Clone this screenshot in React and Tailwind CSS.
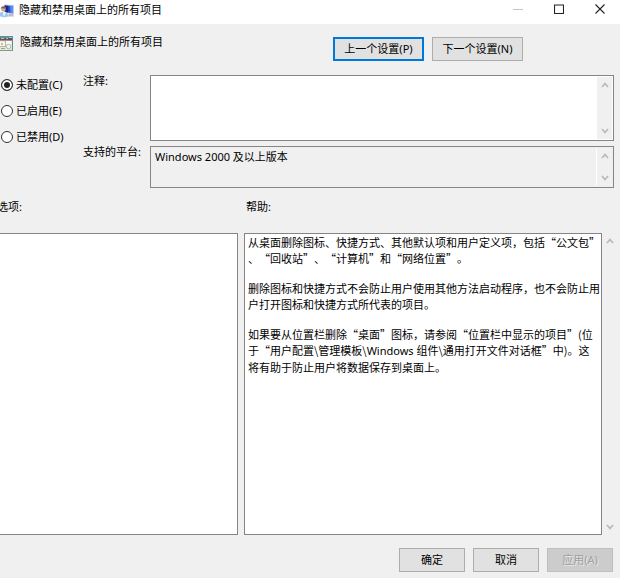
import { useState } from 'react';

const STATES = [
  { value: 'none', label: '未配置(C)' },
  { value: 'enabled', label: '已启用(E)' },
  { value: 'disabled', label: '已禁用(D)' },
];

const PolicyIcon = () => (
  <svg className="block h-4 w-4 shrink-0" viewBox="0 -1 16 16" aria-hidden="true">
    <path d="M4 1.4L14 2v9.4L4 10z" fill="#c3cde2" />
    <path d="M4.6 2.4L13 3v7.2L4.6 9z" fill="#2450d0" />
    <path d="M4.6 2.4l3.6.3v6.8L4.6 9z" fill="#16289a" />
    <path d="M10 2.8l3 .2v7.2l-2.4-.3z" fill="#5f8cec" />
    <path d="M8.6 11h4l1.6 2.4H8z" fill="#b9bfca" />
    <circle cx="3.4" cy="6" r="2.4" fill="#d9a878" />
    <path d="M.8 5.8c0-3.4 5-3.6 5.3-.2-1.8.2-3.2-.8-5.3.2z" fill="#7d6450" />
    <path d="M-1 13c0-3 2-4.6 4.4-4.6S8.2 10 8.2 13.4L4 14.6z" fill="#9cc6f0" />
    <path d="M2.6 8.6l1.4 5.6 2-5.2z" fill="#eef5fd" />
  </svg>
);

const SettingIcon = () => (
  <svg className="block h-[18px] w-4 shrink-0" viewBox="0 0 16 18" aria-hidden="true">
    <rect x="-1" y="2" width="14" height="15" fill="#e9e7dc" />
    <rect x="-1" y="2" width="14" height="2" fill="#5f9298" />
    <rect x="-1" y="4" width="13" height="2" fill="#55567c" />
    <path d="M1 4.5h3M6 4.5h2" stroke="#d8c46a" />
    <path d="M9 3.5h3" stroke="#a9c8c8" />
    <path d="M-1 6.5h13" stroke="#a98c90" />
    <path d="M12.5 4v13" stroke="#5a8f8a" />
    <path d="M-1 16.5h14" stroke="#7c9c92" />
    <rect x="0" y="8" width="5" height="4" fill="#f8f6ee" />
    <rect x="1" y="9" width="2" height="2" fill="#b9c78c" />
    <rect x="6" y="7" width="5" height="4" fill="#fbfaf6" />
    <path d="M5.5 7v5M0 12.5h6" stroke="#b9b3a6" />
    <circle cx="8.5" cy="12.5" r="2.2" fill="#f6f6f0" stroke="#8fae8f" strokeWidth="0.8" />
    <path d="M1 14.5h4" stroke="#8fae84" />
  </svg>
);

const Chevron = ({ down }) => (
  <svg className={`block h-2 w-2 ${down ? 'rotate-180' : ''}`} viewBox="0 0 8 8" aria-hidden="true">
    <path d="M1 6l3-3.5L7 6" fill="none" stroke="#b9b9b9" strokeWidth="1.7" />
  </svg>
);

const ScrollBar = ({ className = '' }) => (
  <div className={`flex shrink-0 flex-col items-center justify-between bg-[#f0f0f0] ${className}`}>
    <Chevron />
    <Chevron down />
  </div>
);

const Button = ({ children, className = '', ...props }) => (
  <button type="button" className={`h-6 whitespace-nowrap text-center ${className}`} {...props}>
    {children}
  </button>
);

const Latin = ({ children }) => <span className="font-['Noto_Sans']">{children}</span>;

const App = () => {
  const [state, setState] = useState('none');
  const [comment, setComment] = useState('');

  return (
    <div className="flex min-h-screen flex-col overflow-hidden bg-[#f0f0f0] font-['Noto_Sans','Noto_Sans_CJK_SC',sans-serif] text-[11px] leading-4 text-black">
      <header className="flex h-6 items-start justify-between bg-white">
        <div className="flex items-center gap-[3px] pt-0.5">
          <PolicyIcon />
          <h1>隐藏和禁用桌面上的所有项目</h1>
        </div>
        <div className="flex gap-[31px] pt-1 pr-[15px]">
          <button type="button" aria-label="最小化" disabled>
            <svg className="block h-[10px] w-[10px]" viewBox="0 0 10 10"><path d="M0 5.5h10" stroke="#c4c4c4" /></svg>
          </button>
          <button type="button" aria-label="最大化">
            <svg className="block h-[10px] w-[10px]" viewBox="0 0 10 10"><path d="M.5 1h9v8.5h-9z" fill="none" stroke="#222" strokeWidth="1.1" /></svg>
          </button>
          <button type="button" aria-label="关闭">
            <svg className="block h-[10px] w-[10px]" viewBox="0 0 10 10"><path d="M.5.5l9 9M9.5.5l-9 9" stroke="#222" strokeWidth="1.1" /></svg>
          </button>
        </div>
      </header>

      <div className="flex h-[51px] items-start justify-between pt-[10px]">
        <div className="flex items-start gap-1">
          <SettingIcon />
          <h2>隐藏和禁用桌面上的所有项目</h2>
        </div>
        <div className="flex gap-2 pt-[3px] pr-[97px]">
          <Button className="w-[91px] border-2 border-[#0078d7] bg-[#e1e1e1]">上一个设置(P)</Button>
          <Button className="w-[91px] border border-[#adadad] bg-[#e1e1e1]">下一个设置(N)</Button>
        </div>
      </div>

      <div className="flex pr-[6px]">
        <fieldset className="flex w-[83px] shrink-0 flex-col gap-[10px] pt-[2px]">
          {STATES.map((s) => (
            <label key={s.value} className="flex items-center gap-[3px] pl-px">
              <input
                type="radio"
                name="state"
                checked={state === s.value}
                onChange={() => setState(s.value)}
                className="h-3 w-3 appearance-none rounded-full border border-[#333] bg-white checked:bg-[#222] checked:shadow-[inset_0_0_0_2px_#fff]"
              />
              {s.label}
            </label>
          ))}
        </fieldset>
        <div className="grid flex-1 grid-cols-[67px_1fr] gap-y-[5px]">
          <label htmlFor="comment" className="-mt-0.5">注释:</label>
          <div className="flex h-[66px] border border-[#858585] bg-white p-px">
            <textarea
              id="comment"
              value={comment}
              onChange={(e) => setComment(e.target.value)}
              className="min-w-0 flex-1 resize-none overflow-hidden px-[3px] py-px outline-none"
            />
            <ScrollBar className="w-[15px] py-1" />
          </div>
          <label htmlFor="platform" className="-mt-0.5">支持的平台:</label>
          <div className="flex h-[42px] border border-[#858585] p-px">
            <textarea
              id="platform"
              readOnly
              value="Windows 2000 及以上版本"
              className="min-w-0 flex-1 resize-none overflow-hidden px-[3px] py-px outline-none"
            />
            <ScrollBar className="w-4 border-l border-white py-1" />
          </div>
        </div>
      </div>

      <div className="flex h-[45px] items-start pt-[11px]">
        <h3 className="-ml-[3px] w-[249px]">选项:</h3>
        <h3>帮助:</h3>
      </div>

      <main className="flex flex-1 pr-[3px]">
        <section aria-label="选项" className="w-[238px] shrink-0 border border-l-0 border-[#858585] bg-white" />
        <section
          aria-label="帮助"
          className="ml-[6px] flex flex-1 flex-col gap-[14px] border border-[#858585] bg-white pl-[3px] whitespace-nowrap font-['Noto_Sans_CJK_SC',sans-serif] [text-spacing-trim:space-all]"
        >
          <p>
            从桌面删除图标、快捷方式、其他默认项和用户定义项，包括“公文包”<br />
            、“回收站”、“计算机”和“网络位置”。
          </p>
          <p>
            删除图标和快捷方式不会防止用户使用其他方法启动程序，也不会防止用<br />
            户打开图标和快捷方式所代表的项目。
          </p>
          <p>
            如果要从位置栏删除“桌面”图标，请参阅“位置栏中显示的项目”(位<br />
            于“用户配置\管理模板\<Latin>Windows </Latin>组件\通用打开文件对话框”中)。这<br />
            将有助于防止用户将数据保存到桌面上。
          </p>
        </section>
        <ScrollBar className="w-[15px] py-1" />
      </main>

      <footer className="flex justify-end gap-2 pt-[13px] pr-[7px] pb-[6px]">
        <Button className="w-[66px] border border-[#adadad] bg-[#e1e1e1]">确定</Button>
        <Button className="w-[66px] border border-[#adadad] bg-[#e1e1e1]">取消</Button>
        <Button disabled className="w-[66px] border border-[#bfbfbf] bg-[#cccccc] text-[#a0a0a0] [text-shadow:1px_1px_0_#e8e8e8]">应用(A)</Button>
      </footer>
    </div>
  );
};

export default App;
